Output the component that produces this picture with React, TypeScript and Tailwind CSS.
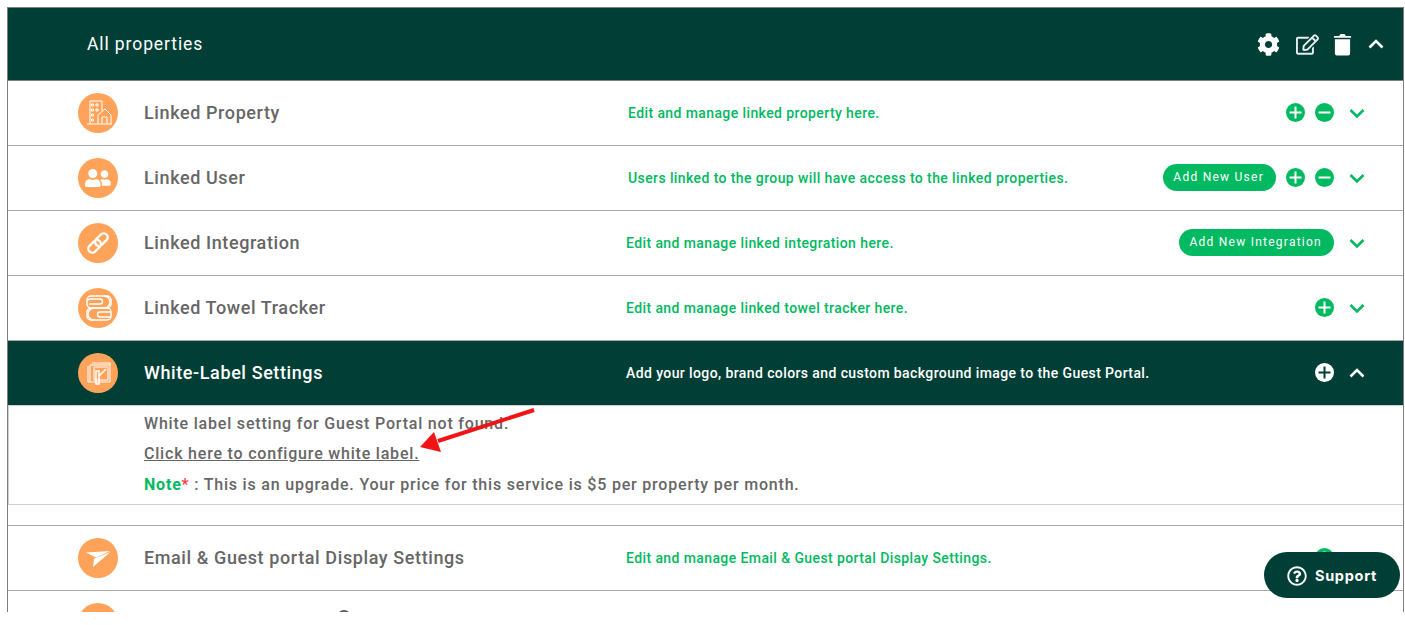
import type { ReactNode } from 'react'
import { FaCog, FaRegEdit, FaRegQuestionCircle, FaUserFriends } from 'react-icons/fa'

function BuildingIcon() {
  return (
    <svg viewBox="0 0 30 30" className="h-[30px] w-[30px]" fill="none" stroke="white" strokeWidth="1">
      <path d="M4 26h25M7 26V3h12v10M8.500 6h2v2h-2zM13 6h2v2h-2zM8.500 11h2v2h-2zM13 11h2v2h-2zM8.500 16h2v2h-2zM8.500 21h2v2h-2z" />
      <path d="M15 26v-9l7-6 6 6v9M19 26v-7h5v7" />
    </svg>
  )
}

function LinkIcon() {
  return (
    <svg viewBox="0 0 30 30" className="h-[30px] w-[30px]" fill="none" stroke="white" strokeWidth="2.400" strokeLinecap="round">
      <g transform="rotate(-45 15 15)">
        <path d="M13 11H7a4 4 0 0 0 0 8h7a4 4 0 0 0 3-6" />
        <path d="M17 19h6a4 4 0 0 0 0-8h-7a4 4 0 0 0-3 6" />
      </g>
    </svg>
  )
}

function TrashIcon() {
  return (
    <svg viewBox="0 0 20 24" className="h-[24px] w-[19px]" fill="white">
      <path d="M1 3.500h5.500L8 1.500h4l1.500 2H19v2H1zM2 7h16v15a2 2 0 0 1-2 2H4a2 2 0 0 1-2-2z" />
    </svg>
  )
}

function TowelIcon() {
  return (
    <svg viewBox="0 0 30 30" className="h-[30px] w-[30px]" fill="none" stroke="white" strokeWidth="1.500">
      <path d="M8 3h16a4 4 0 0 1 4 4v4a4 4 0 0 1-4 4H8a4 4 0 0 1-4-4V7a4 4 0 0 1 4-4z" />
      <path d="M4 8a3 3 0 0 1 3-2h10a2.500 2.500 0 0 1 0 5H6M21 3a5 5 0 0 1 0 12" />
      <path d="M8 15h16a4 4 0 0 1 4 4v4a4 4 0 0 1-4 4H8a4 4 0 0 1-4-4v-4a4 4 0 0 1 4-4z" />
      <path d="M11 15a5 5 0 0 0 0 12M28 19h-11a2.500 2.500 0 0 0 0 5h11" />
    </svg>
  )
}

function LabelIcon() {
  return (
    <svg viewBox="0 0 30 30" className="h-[30px] w-[30px]" fill="none" stroke="white" strokeWidth="1">
      <path d="M9 5h18v19H9M7 7h20M5 8v16h4M7 7v17M11 9h14v13H11z" />
      <path d="M13 26V13h3v13zM16 18l7-7" strokeWidth="1.500" />
    </svg>
  )
}

function PlaneIcon() {
  return (
    <svg viewBox="0 0 30 30" className="h-[30px] w-[30px]" fill="white">
      <path d="M3 9.500 27 8 13 14.500zM27.500 9 10 24l1-8.500z" />
    </svg>
  )
}

function CircleButton({ kind, dark }: { kind: 'plus' | 'minus'; dark?: boolean }) {
  const fill = dark ? '#ffffff' : '#00b960'
  const stroke = dark ? '#013f36' : '#ffffff'
  return (
    <svg viewBox="0 0 19 19" className="h-[19px] w-[19px]">
      <circle cx="9.500" cy="9.500" r="9.500" fill={fill} />
      <path d={kind === 'plus' ? 'M9.500 3.500v12M3.500 9.500h12' : 'M3.500 9.500h12'} stroke={stroke} strokeWidth="2" />
    </svg>
  )
}

function Chevron({ up, color }: { up?: boolean; color: string }) {
  return (
    <svg viewBox="0 0 20 12" className="h-[12px] w-[20px]" fill="none" stroke={color} strokeWidth="2.600">
      <path d={up ? 'M3.500 9.500 10 3l6.500 6.500' : 'M3.500 3 10 9.500 16.500 3'} />
    </svg>
  )
}

function Pill({ label }: { label: string }) {
  return (
    <span className="flex h-[27px] items-center rounded-full bg-[#00b960] pb-px pl-[10px] pr-[12px] text-[12px] tracking-[1.250px] text-white">
      {label}
    </span>
  )
}

interface RowProps {
  icon: ReactNode
  title: string
  desc: string
  active?: boolean
  descOffset?: boolean
  pill?: string
  plus?: boolean
  minus?: boolean
}

function Row({ icon, title, desc, active, descOffset, pill, plus, minus }: RowProps) {
  return (
    <div
      className={`flex h-[65px] items-center border-b pb-px pl-[70px] pr-[36px] ${
        active ? 'border-[#cfcfcf] bg-[#013f36]' : 'border-[#a9a9a9] bg-white'
      }`}
    >
      <div className="flex h-10 w-10 shrink-0 items-center justify-center rounded-full bg-[#ffa35a] text-white">{icon}</div>
      <div
        className={`ml-[26px] w-[482px] shrink-0 text-[18px] font-medium tracking-[0.600px] ${
          active ? 'text-white' : 'text-[#666666]'
        }`}
      >
        {title}
      </div>
      <div
        className={`mt-px flex-1 text-[14px] font-medium tracking-[0.400px] ${active ? 'text-white' : 'text-[#00b960]'} ${
          descOffset ? 'pl-[2px]' : ''
        }`}
      >
        {desc}
      </div>
      <div className="flex items-center gap-[10px]">
        {pill && <Pill label={pill} />}
        {plus && <CircleButton kind="plus" dark={active} />}
        {minus && <CircleButton kind="minus" />}
        <div className="ml-[3px]">
          <Chevron up={active} color={active ? '#ffffff' : '#00b960'} />
        </div>
      </div>
    </div>
  )
}

export default function App() {
  return (
    <div className="relative h-[625px] w-[1405px] overflow-hidden bg-white font-['Roboto',sans-serif]">
      <div className="ml-[7px] mr-px mt-[7px] h-[605px] overflow-hidden border-x border-t border-[#7f7f7f]">
        <div className="flex h-[73px] items-center border-b border-[#7f7f7f] bg-[#013f36] pl-[79px] pr-[17px] text-white">
          <span className="flex-1 text-[17.500px] tracking-[0.900px]">All properties</span>
          <FaCog className="h-[23px] w-[23px]" />
          <FaRegEdit className="ml-[16px] h-[23px] w-[23px] opacity-90" />
          <div className="ml-[14px]">
            <TrashIcon />
          </div>
          <div className="ml-[14px]">
            <Chevron up color="#ffffff" />
          </div>
        </div>

        <Row icon={<BuildingIcon />} title="Linked Property" desc="Edit and manage linked property here." descOffset plus minus />
        <Row
          icon={<FaUserFriends className="h-[24px] w-[26px]" />}
          title="Linked User"
          desc="Users linked to the group will have access to the linked properties."
          descOffset
          pill="Add New User"
          plus
          minus
        />
        <Row icon={<LinkIcon />} title="Linked Integration" desc="Edit and manage linked integration here." pill="Add New Integration" />
        <Row icon={<TowelIcon />} title="Linked Towel Tracker" desc="Edit and manage linked towel tracker here." plus />
        <Row
          active
          icon={<LabelIcon />}
          title="White-Label Settings"
          desc="Add your logo, brand colors and custom background image to the Guest Portal."
          plus
        />

        <div className="h-[99px] border-b border-l border-[#cfcfcf] pl-[135px] pt-[2.500px] text-[16px] font-medium leading-[30.500px] tracking-[0.800px] text-[#666666]">
          <div>White label setting for Guest Portal not found.</div>
          <div className="underline">Click here to configure white label.</div>
          <div>
            <span className="font-bold text-[#00b960]">Note</span>
            <span className="text-[#ff3b3b]">*</span> : This is an upgrade. Your price for this service is $5 per property per month.
          </div>
        </div>

        <div className="h-[21px] border-b border-[#a9a9a9]" />

        <Row icon={<PlaneIcon />} title="Email & Guest portal Display Settings" desc="Edit and manage Email & Guest portal Display Settings." plus />

        <div className="flex h-[65px] pl-[70px] pt-[12px]">
          <div className="h-10 w-10 shrink-0 rounded-full bg-[#ffa35a]" />
          <div className="ml-[219px] mt-[7px] h-[14px] w-[14px] rounded-full border-2 border-[#5f5f5f]" />
        </div>
      </div>

      <svg viewBox="0 0 125 50" className="absolute left-[415px] top-[404px] h-[50px] w-[125px]">
        <path d="M119 6 23 37" stroke="#f01414" strokeWidth="4" fill="none" />
        <path d="M5 43 19 28l7 20z" fill="#f01414" />
      </svg>

      <div className="absolute left-[1264px] top-[552px] flex h-[46px] w-[136px] items-center justify-center gap-[8px] rounded-full bg-[#013f36] pt-px font-['Inter',sans-serif] text-[14.500px] font-bold tracking-[0.700px] text-white">
        <FaRegQuestionCircle className="h-[20px] w-[20px]" />
        Support
      </div>
    </div>
  )
}
